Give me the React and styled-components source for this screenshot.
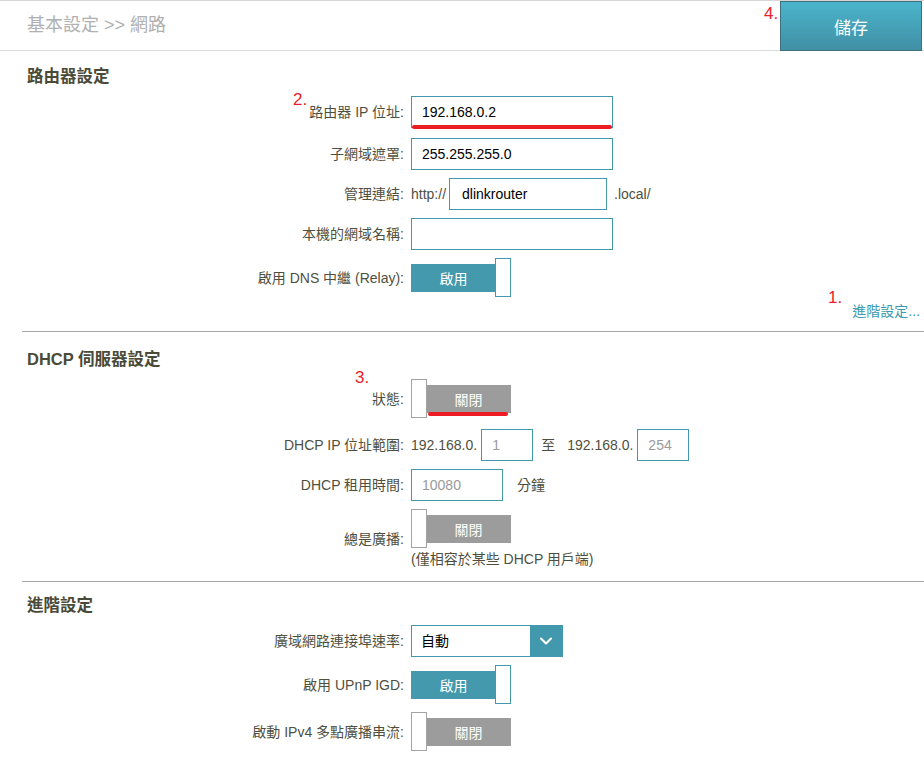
import React from "react";
import styled, { createGlobalStyle } from "styled-components";
import { ChevronDown } from "lucide-react";

const GlobalStyle = createGlobalStyle`
  body {
    margin: 0;
    background: #fff;
    font-family: "Liberation Sans", Arial, "Noto Sans CJK TC", sans-serif;
  }
`;

const TEAL = "#4298ac";

function Toggle({ on, underline }) {
  return (
    <ToggleWrap>
      {on ? (
        <>
          <ToggleBar $on>啟用</ToggleBar>
          <Knob $on />
        </>
      ) : (
        <>
          <Knob />
          <ToggleBar>關閉</ToggleBar>
        </>
      )}
      {underline && <Underline $left={17} $top={33} $w={80} />}
    </ToggleWrap>
  );
}

export default function App() {
  return (
    <Page>
      <GlobalStyle />
      <Header>
        <Breadcrumb>基本設定 &gt;&gt; 網路</Breadcrumb>
        <SaveButton>儲存</SaveButton>
        <Mark $left={764} $top={4}>4.</Mark>
      </Header>

      <Section>
        <SectionTitle $mt={15}>路由器設定</SectionTitle>
        <Row $mb={10}>
          <Mark $left={271} $top={-5}>2.</Mark>
          <Label>路由器 IP 位址:</Label>
          <Controls>
            <InputWrap>
              <TextInput defaultValue="192.168.0.2" />
              <Underline $left={1} $top={29} $w={200} />
            </InputWrap>
          </Controls>
        </Row>
        <Row>
          <Label>子網域遮罩:</Label>
          <Controls>
            <TextInput defaultValue="255.255.255.0" />
          </Controls>
        </Row>
        <Row>
          <Label>管理連結:</Label>
          <Controls>
            <Plain>http://</Plain>
            <TextInput $w={158} $ml={3} $pl={12} defaultValue="dlinkrouter" />
            <Plain $ml={7}>.local/</Plain>
          </Controls>
        </Row>
        <Row>
          <Label>本機的網域名稱:</Label>
          <Controls>
            <TextInput defaultValue="" />
          </Controls>
        </Row>
        <Row>
          <Label>啟用 DNS 中繼 (Relay):</Label>
          <Controls>
            <Toggle on />
          </Controls>
        </Row>
        <LinkRow>
          <Mark $left={806} $top={-13}>1.</Mark>
          <MoreLink href="#">進階設定...</MoreLink>
        </LinkRow>
        <Divider />

        <SectionTitle $mt={17}>DHCP 伺服器設定</SectionTitle>
        <Row $mb={11}>
          <Mark $left={333} $top={-10}>3.</Mark>
          <Label>狀態:</Label>
          <Controls>
            <Toggle underline />
          </Controls>
        </Row>
        <Row>
          <Label>DHCP IP 位址範圍:</Label>
          <Controls>
            <Plain>192.168.0.</Plain>
            <TextInput $w={52} $ml={4} $muted defaultValue="1" />
            <Plain $ml={8}>至</Plain>
            <Plain $ml={12}>192.168.0.</Plain>
            <TextInput $w={52} $ml={4} $muted defaultValue="254" />
          </Controls>
        </Row>
        <Row>
          <Label>DHCP 租用時間:</Label>
          <Controls>
            <TextInput $w={92} $muted defaultValue="10080" />
            <Plain $ml={14}>分鐘</Plain>
          </Controls>
        </Row>
        <Row $mb={13}>
          <Label>總是廣播:</Label>
          <Stack>
            <Toggle />
            <Note>(僅相容於某些 DHCP 用戶端)</Note>
          </Stack>
        </Row>
        <Divider />

        <SectionTitle $mt={13}>進階設定</SectionTitle>
        <Row>
          <Label>廣域網路連接埠速率:</Label>
          <Controls>
            <Select>
              <SelectValue>自動</SelectValue>
              <SelectArrow>
                <ChevronDown size={20} strokeWidth={2.5} color="#fff" />
              </SelectArrow>
            </Select>
          </Controls>
        </Row>
        <Row>
          <Label>啟用 UPnP IGD:</Label>
          <Controls>
            <Toggle on />
          </Controls>
        </Row>
        <Row>
          <Label>啟動 IPv4 多點廣播串流:</Label>
          <Controls>
            <Toggle />
          </Controls>
        </Row>
      </Section>
    </Page>
  );
}

const Page = styled.div`
  width: 924px;
  min-height: 761px;
  font-size: 14px;
  color: #4f4f40;
`;

const Header = styled.div`
  position: relative;
  display: flex;
  justify-content: space-between;
  align-items: stretch;
  height: 51px;
  box-sizing: border-box;
  border-top: 1px solid #d6d6d6;
  border-bottom: 1px solid #dcdcdc;
`;

const Breadcrumb = styled.div`
  padding-left: 27px;
  font-size: 18px;
  line-height: 49px;
  color: #b0b0b0;
`;

const SaveButton = styled.button`
  width: 142px;
  height: 50px;
  margin: 0 2px -1px 0;
  border: 1px solid #3d6f7d;
  background: linear-gradient(#4ab4cb, #4190a5);
  color: #fff;
  font-family: inherit;
  font-size: 17px;
  cursor: pointer;
`;

const Mark = styled.span`
  position: absolute;
  left: ${(p) => p.$left}px;
  top: ${(p) => p.$top}px;
  font-size: 17px;
  line-height: 1;
  color: #ee1d2b;
`;

const Section = styled.div`
  padding-left: 22px;
`;

const SectionTitle = styled.h2`
  margin: ${(p) => p.$mt}px 0 10px 5px;
  font-size: 16.5px;
  line-height: 20px;
  font-weight: bold;
  color: #4a4a38;
`;

const Row = styled.div`
  position: relative;
  display: flex;
  align-items: center;
  margin-bottom: ${(p) => (p.$mb !== undefined ? p.$mb : 8)}px;
`;

const Label = styled.div`
  width: 389px;
  box-sizing: border-box;
  padding-right: 7px;
  text-align: right;
  line-height: 18px;
  white-space: nowrap;
`;

const Controls = styled.div`
  display: flex;
  align-items: center;
`;

const Stack = styled.div`
  display: flex;
  flex-direction: column;
`;

const InputWrap = styled.div`
  position: relative;
`;

const TextInput = styled.input`
  width: ${(p) => p.$w || 202}px;
  height: 32px;
  box-sizing: border-box;
  margin-left: ${(p) => p.$ml || 0}px;
  padding: 0 0 0 ${(p) => p.$pl || 10}px;
  border: 1px solid ${TEAL};
  border-radius: 0;
  outline: none;
  font-family: inherit;
  font-size: 14px;
  color: ${(p) => (p.$muted ? "#9a9a9a" : "#000")};
  background: #fff;
`;

const Plain = styled.span`
  margin-left: ${(p) => p.$ml || 0}px;
  line-height: 18px;
  white-space: nowrap;
`;

const Underline = styled.div`
  position: absolute;
  left: ${(p) => p.$left}px;
  top: ${(p) => p.$top}px;
  width: ${(p) => p.$w}px;
  height: 4px;
  border-radius: 2px;
  background: #ed1c24;
`;

const ToggleWrap = styled.div`
  position: relative;
  display: flex;
  align-items: center;
  height: 39px;
`;

const ToggleBar = styled.div`
  width: 85px;
  height: 28px;
  display: flex;
  align-items: center;
  justify-content: center;
  background: ${(p) => (p.$on ? "#4499ad" : "#9c9c9c")};
  color: #fff;
  font-size: 14px;
  margin-left: ${(p) => (p.$on ? 0 : -1)}px;
`;

const Knob = styled.div`
  width: 16px;
  height: 39px;
  box-sizing: border-box;
  background: #fff;
  border: 1px solid ${(p) => (p.$on ? TEAL : "#a3a3a3")};
  margin-left: ${(p) => (p.$on ? -1 : 0)}px;
  position: relative;
  z-index: 1;
`;

const Note = styled.div`
  margin-top: 2px;
  line-height: 18px;
`;

const LinkRow = styled.div`
  position: relative;
  display: flex;
  justify-content: flex-end;
  padding-right: 4px;
  margin: -3px 0 11px;
  line-height: 18px;
`;

const MoreLink = styled.a`
  color: #3b9ab1;
  text-decoration: none;
  font-size: 14px;
`;

const Divider = styled.div`
  border-top: 1px solid #a5a5a5;
`;

const Select = styled.div`
  display: flex;
  width: 152px;
  height: 32px;
  box-sizing: border-box;
  border: 1px solid ${TEAL};
`;

const SelectValue = styled.div`
  flex: 1;
  padding-left: 9px;
  line-height: 30px;
  color: #000;
`;

const SelectArrow = styled.div`
  width: 32px;
  display: flex;
  align-items: center;
  justify-content: center;
  background: ${TEAL};
`;
